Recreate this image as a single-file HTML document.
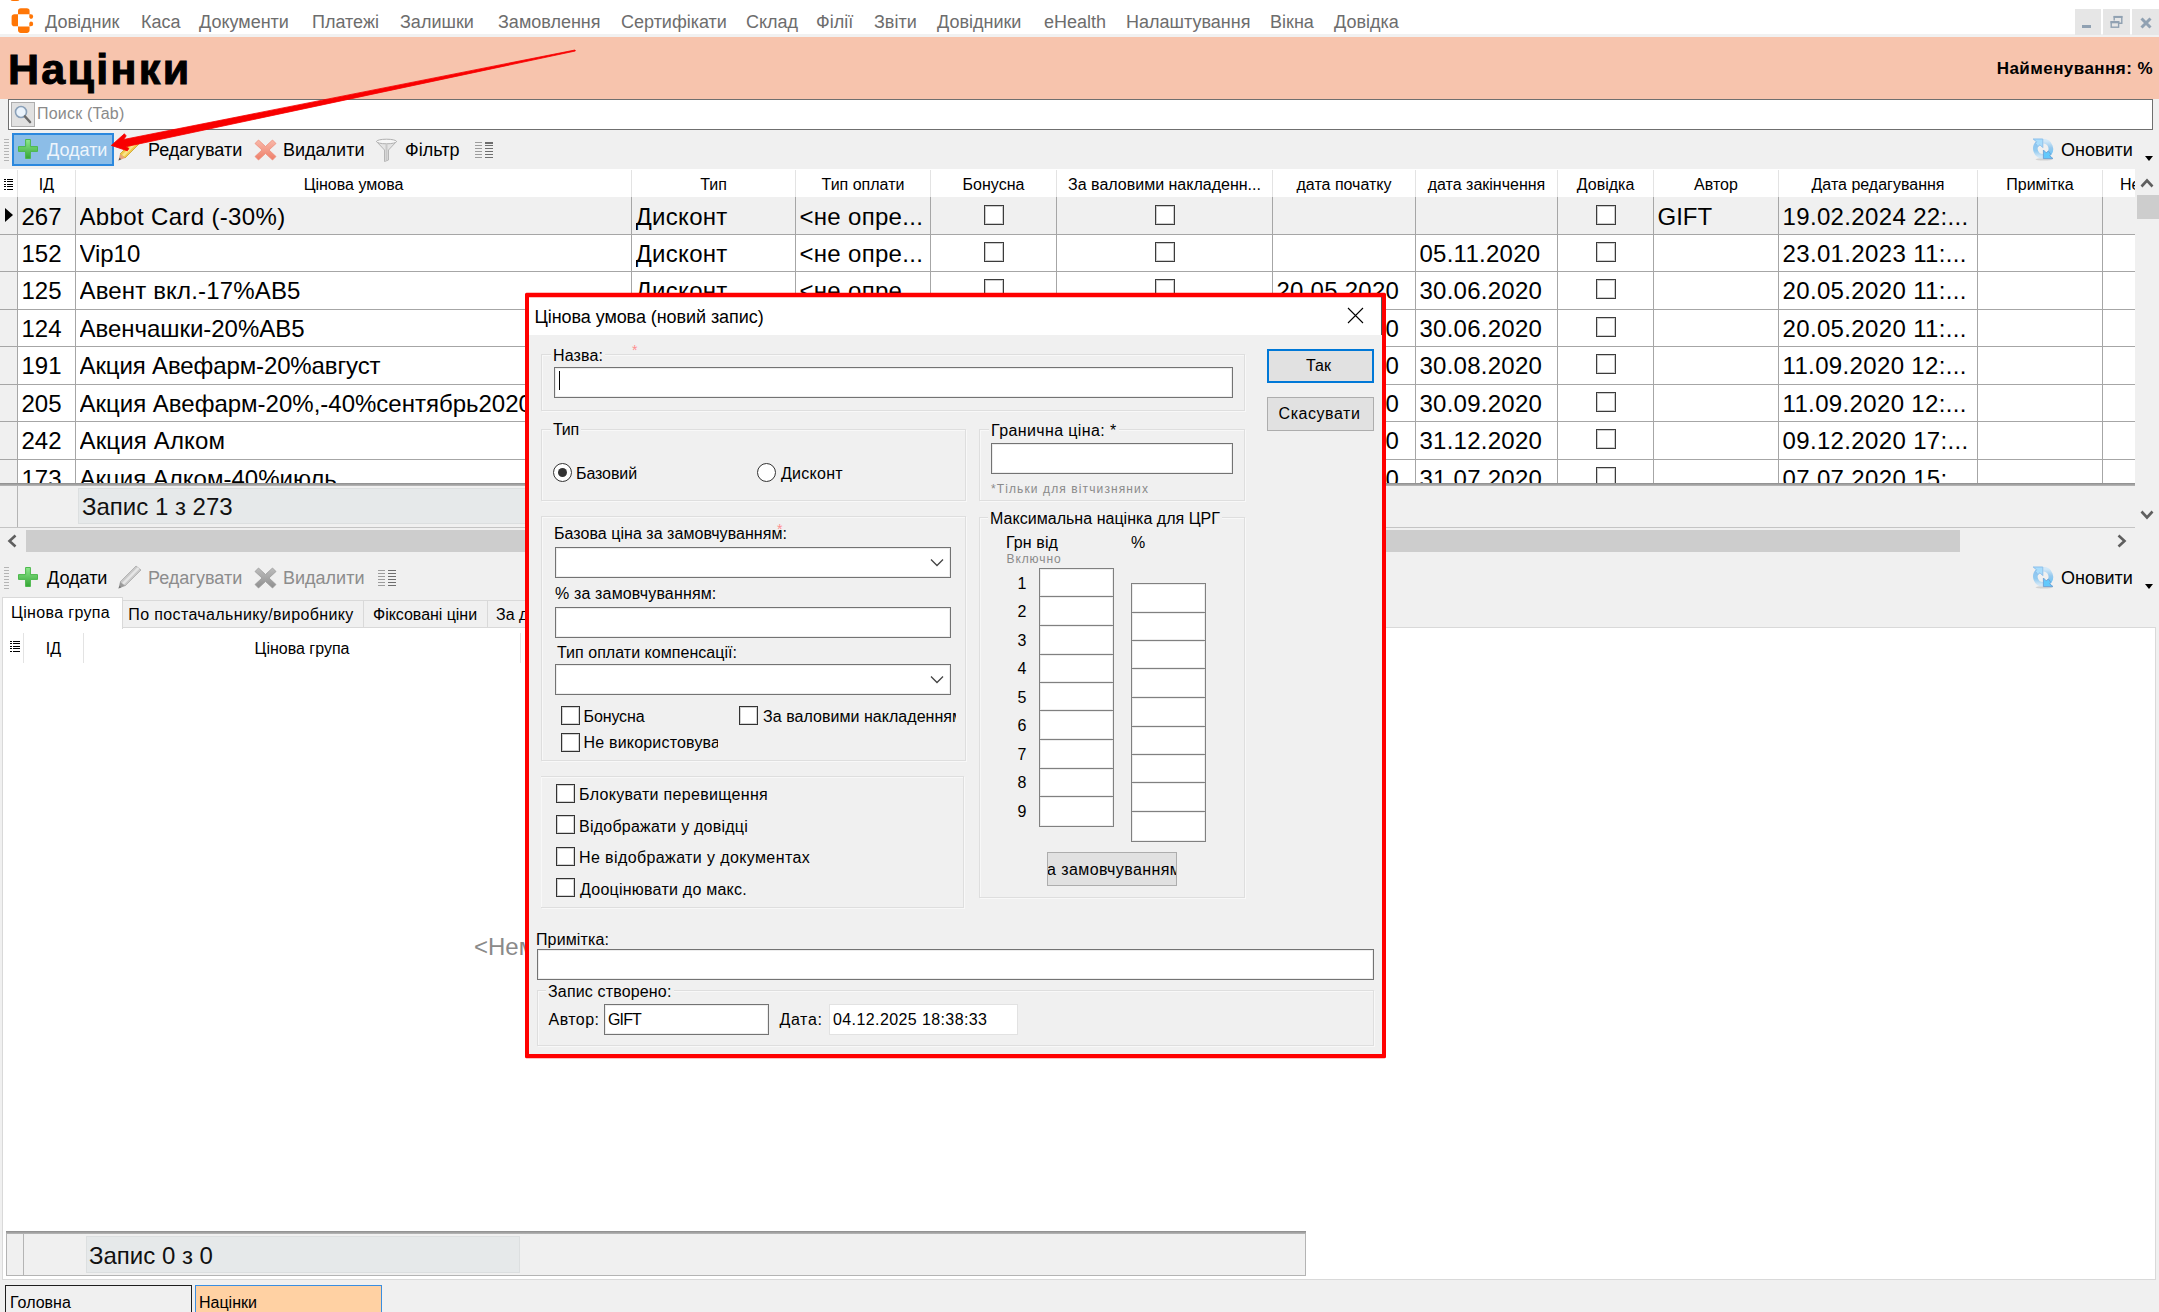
<!DOCTYPE html><html lang="uk"><head><meta charset="utf-8"><title>Націнки</title><style>
*{box-sizing:border-box}
html,body{margin:0;padding:0}
body{width:2159px;height:1312px;overflow:hidden;background:#f0f0f0;position:relative;font-family:"Liberation Sans",sans-serif;color:#000}
.a{position:absolute;white-space:nowrap}
.t16{font-size:16px;line-height:20px}
.t18{font-size:18px;line-height:22px}
.t24{font-size:24px;line-height:30px}
.menu span{position:absolute;top:11px;font-size:18px;line-height:22px;color:#6d6d6d}
.hl{position:absolute;height:1px;background:#a6a6a6}
.vl{position:absolute;width:1px;background:#a6a6a6}
.hdr{position:absolute;top:175px;font-size:16px;line-height:20px;text-align:center;white-space:nowrap;overflow:hidden}
.cell{position:absolute;font-size:24px;line-height:30px;white-space:nowrap;overflow:hidden}
.cb{position:absolute;width:17px;height:17px;border:1px solid #333;background:#fff}
.gb{position:absolute;border:1px solid #dedede;box-shadow:inset 1px 1px 0 #f8f8f8,1px 1px 0 #f8f8f8}
.gl{position:absolute;font-size:16px;line-height:18px;background:#f0f0f0;white-space:nowrap}
.inp{position:absolute;background:#fff;border:1px solid #737373;box-shadow:inset 0 0 0 1px rgba(0,0,0,.07)}
.dcb{position:absolute;width:19px;height:19px;border:1px solid #333;background:#fff;box-shadow:inset 0 0 0 1px rgba(0,0,0,.18)}
.dl{position:absolute;font-size:16px;line-height:20px;white-space:nowrap;letter-spacing:.25px}
.btn{position:absolute;background:#e1e1e1;border:1px solid #adadad;font-size:16px;text-align:center;white-space:nowrap;overflow:hidden}
</style></head><body>
<div class="a" style="left:0;top:0;width:2159px;height:37px;background:#fff"></div>
<div class="a" style="left:0;top:0;width:640px;height:2px;overflow:hidden"><div class="a" style="left:40px;top:-19.800px;font-size:18px;line-height:20px;color:#444">Довідник (Націнки) - аптечна програма, користувач: gift, підрозділ: аптека</div><div class="a" style="left:10px;top:-3px;width:10px;height:4px;background:#ff7300;border-radius:0 0 3px 3px"></div></div>
<div class="a" style="left:0;top:34px;width:2159px;height:3px;background:#f1f1f1"></div>
<svg class="a" style="left:10px;top:7px" width="26" height="28" viewBox="10 7 26 28"><g fill="#ff7606"><path d="M18 14.200V11a2.800 2.800 0 0 1 2.800-2.800h6a2.800 2.800 0 0 1 2.800 2.800v3.200z"/><path d="M18 26.400v3.700a2.800 2.800 0 0 0 2.800 2.800h6a2.800 2.800 0 0 0 2.800-2.800v-3.700z"/><path d="M18 14.300h-3.600a2.800 2.800 0 0 0-2.800 2.800v6.300a2.800 2.800 0 0 0 2.800 2.800H18z"/><path d="M29.300 14.300h1.600a2.300 2.300 0 0 1 0 4.600 2.300 2.300 0 0 1-1.600-1.300z"/><path d="M29.300 26.200h1.600a2.300 2.300 0 0 0 0-4.600 2.300 2.300 0 0 0-1.600 1.300z"/></g></svg>
<div class="menu"><span style="left:45px">Довідник</span><span style="left:141px">Каса</span><span style="left:199px">Документи</span><span style="left:312px">Платежі</span><span style="left:400px">Залишки</span><span style="left:498px">Замовлення</span><span style="left:621px">Сертифікати</span><span style="left:746px">Склад</span><span style="left:816px">Філії</span><span style="left:874px">Звіти</span><span style="left:937px">Довідники</span><span style="left:1044px">eHealth</span><span style="left:1126px">Налаштування</span><span style="left:1270px">Вікна</span><span style="left:1334px">Довідка</span></div>
<div class="a" style="left:2075px;top:9px;width:26px;height:26px;background:#e6e6e6"></div>
<div class="a" style="left:2103px;top:9px;width:27px;height:26px;background:#e6e6e6"></div>
<div class="a" style="left:2132px;top:9px;width:27px;height:26px;background:#e6e6e6"></div>
<div class="a" style="left:2082px;top:25px;width:9px;height:3px;background:#90a1b2"></div>
<svg class="a" style="left:2109px;top:15px" width="15" height="14" viewBox="0 0 15 14" fill="none" stroke="#90a1b2"><path d="M5.200 5.500V1.800h7.600v6.400h-3" stroke-width="1.400"/><path d="M4.600 1.900h8.800" stroke-width="2"/><rect x="2.200" y="6.800" width="7.400" height="5.400" stroke-width="1.400"/><path d="M1.500 7.200h8.800" stroke-width="2.200"/></svg>
<svg class="a" style="left:2139px;top:16px" width="14" height="14" viewBox="0 0 14 14" stroke="#90a1b2" stroke-width="3"><path d="M2.500 2.500l9 9M11.500 2.500l-9 9"/></svg>
<div class="a" style="left:0;top:37px;width:2159px;height:62px;background:#f7c4ad"></div>
<div class="a" style="left:8px;top:43px;font-size:43px;line-height:52px;font-weight:700;letter-spacing:2.3px;-webkit-text-stroke:1px #000">Націнки</div>
<div class="a" style="right:6px;top:59px;font-size:17px;line-height:20px;font-weight:700;letter-spacing:.45px">Найменування: %</div>
<div class="a" style="left:8px;top:99px;width:2145px;height:31px;background:#fff;border:1px solid #6f6f6f"></div>
<div class="a" style="left:11px;top:102px;width:24px;height:25px;background:#e1e1e1;border:1px solid #adadad"></div>
<svg class="a" style="left:13px;top:104px" width="20" height="21" viewBox="0 0 20 21"><circle cx="8" cy="8" r="5.500" fill="#eaf3fc" stroke="#8aa0b8" stroke-width="1.600"/><path d="M12 12.500l5 5.500" stroke="#6b6b6b" stroke-width="2.600" stroke-linecap="round"/></svg>
<div class="a" style="left:37px;top:104px;font-size:16px;line-height:20px;color:#8a8a8a;letter-spacing:.2px">Поиск (Tab)</div>
<div class="a" style="left:4px;top:137px;width:5px;height:24px;background:repeating-linear-gradient(#f0f0f0 0 2px,#b4b4b4 2px 3px)"></div>
<div class="a" style="left:12px;top:133px;width:102px;height:33px;background:#8cbde7;border:2px solid #2b88de"></div>
<svg class="a" style="left:17px;top:138px" width="22" height="22" viewBox="0 0 22 22"><defs><linearGradient id="gp17138" x1="0" y1="0" x2="0" y2="1"><stop offset="0" stop-color="#8ee88e"/><stop offset="1" stop-color="#35a535"/></linearGradient></defs><path d="M8.600 1.500h4.800v7.100h7.100v4.800h-7.100v7.100H8.600v-7.100H1.500V8.600h7.100z" fill="url(#gp17138)" stroke="#4cb84c" stroke-width="1" stroke-linejoin="round"/></svg>
<div class="a t18" style="left:47px;top:139px;color:#eef5fc">Додати</div>
<svg class="a" style="left:117px;top:137px" width="26" height="24" viewBox="0 0 26 24"><path d="M19 1l5 4L8 21l-5-4z" fill="#f2c94c" stroke="#c9a227" stroke-width=".8"/><path d="M20.500 2.200l2 1.600L7 19.500l-2-1.600z" fill="#f9e58a"/><path d="M3 17l5 4-6.500 2.500z" fill="#e9a27a"/><path d="M1.500 23.500l1-2.800 1.800 1.500z" fill="#555"/></svg>
<div class="a t18" style="left:148px;top:139px">Редагувати</div>
<svg class="a" style="left:254px;top:139px" width="23" height="22" viewBox="0 0 23 22"><defs><linearGradient id="gx254139" x1="0" y1="0" x2="0" y2="1"><stop offset="0" stop-color="#f9b9aa"/><stop offset="1" stop-color="#ee7e68"/></linearGradient></defs><path d="M4.500 1L11.500 7.500 18.500 1 22 4.500 15 11l7 6.500L18.500 21 11.500 14.500 4.500 21 1 17.500 8 11 1 4.500z" fill="url(#gx254139)" stroke="#ee8d7a" stroke-width=".8" stroke-linejoin="round"/></svg>
<div class="a t18" style="left:283px;top:139px">Видалити</div>
<svg class="a" style="left:375px;top:138px" width="23" height="24" viewBox="0 0 23 24"><path d="M1.500 3.500h20L13.500 12v10l-4 1.500V12z" fill="#e4e4e4" stroke="#b5b5b5" stroke-width="1"/><ellipse cx="11.500" cy="3.500" rx="10" ry="2.300" fill="#f6f6f6" stroke="#b0b0b0" stroke-width="1"/><path d="M11.500 6v16" stroke="#c8c8c8" stroke-width="2"/></svg>
<div class="a t18" style="left:405px;top:139px">Фільтр</div>
<div class="a" style="left:475px;top:142px;width:7px;height:17px;background:repeating-linear-gradient(#9c9c9c 0 1.400px,#f0f0f0 1.400px 2.900px)"></div><div class="a" style="left:485px;top:142px;width:8px;height:17px;background:repeating-linear-gradient(#6e6e6e 0 1.500px,#f0f0f0 1.500px 2.900px)"></div>
<svg class="a" style="left:2032px;top:138px" width="23" height="23" viewBox="0 0 23 23"><defs><linearGradient id="ra2032138" x1="0" y1="0" x2="0" y2="1"><stop offset="0" stop-color="#8ec5f0"/><stop offset=".6" stop-color="#94cbf0"/><stop offset="1" stop-color="#cfe6f6"/></linearGradient><linearGradient id="rb2032138" x1="0" y1="0" x2="0" y2="1"><stop offset="0" stop-color="#d3e8f7"/><stop offset=".5" stop-color="#96c9ee"/><stop offset="1" stop-color="#6ec4f5"/></linearGradient></defs><ellipse cx="12" cy="21.300" rx="8.500" ry="1.300" fill="#d2d2d2"/><path d="M11 18.300A7.600 7.600 0 0 1 6.200 4.800" fill="none" stroke="url(#ra2032138)" stroke-width="4.600"/><path d="M11.200 3.100A7.600 7.600 0 0 1 16 16.600" fill="none" stroke="url(#rb2032138)" stroke-width="4.600"/><path d="M1.200 1h9.600v8.600L8 6.800 5.800 8.600 3.400 5.200 4.600 3.800z" fill="#a9ddfc" stroke="#8cc0ec" stroke-width="1" stroke-linejoin="round"/><path d="M21 20.600h-9.600V12l2.800 2.800 2.200-1.800 2.400 3.400-1.200 1.400z" fill="#62c9fc" stroke="#6fa5d8" stroke-width="1" stroke-linejoin="round"/></svg>
<div class="a t18" style="left:2061px;top:139px">Оновити</div>
<div class="a" style="left:2145px;top:156px;width:0;height:0;border-left:4px solid transparent;border-right:4px solid transparent;border-top:5px solid #000"></div>
<div class="a" style="left:0;top:169px;width:2135px;height:316px;background:#fff"></div>
<div class="hdr" style="left:18px;width:57px">ІД</div>
<div class="hdr" style="left:76px;width:555px">Цінова умова</div>
<div class="hdr" style="left:632px;width:163px">Тип</div>
<div class="hdr" style="left:796px;width:134px">Тип оплати</div>
<div class="hdr" style="left:931px;width:125px">Бонусна</div>
<div class="hdr" style="left:1057px;width:215px">За валовими накладенн...</div>
<div class="hdr" style="left:1273px;width:142px">дата початку</div>
<div class="hdr" style="left:1416px;width:141px">дата закінчення</div>
<div class="hdr" style="left:1558px;width:95px">Довідка</div>
<div class="hdr" style="left:1654px;width:124px">Автор</div>
<div class="hdr" style="left:1779px;width:198px">Дата редагування</div>
<div class="hdr" style="left:1978px;width:124px">Примітка</div>
<div class="hdr" style="left:2103px;width:32px;text-align:left;padding-left:17px">Не</div>
<div class="vl" style="left:75px;top:170px;height:27px;background:#e3e3e3"></div>
<div class="vl" style="left:631px;top:170px;height:27px;background:#e3e3e3"></div>
<div class="vl" style="left:795px;top:170px;height:27px;background:#e3e3e3"></div>
<div class="vl" style="left:930px;top:170px;height:27px;background:#e3e3e3"></div>
<div class="vl" style="left:1056px;top:170px;height:27px;background:#e3e3e3"></div>
<div class="vl" style="left:1272px;top:170px;height:27px;background:#e3e3e3"></div>
<div class="vl" style="left:1415px;top:170px;height:27px;background:#e3e3e3"></div>
<div class="vl" style="left:1557px;top:170px;height:27px;background:#e3e3e3"></div>
<div class="vl" style="left:1653px;top:170px;height:27px;background:#e3e3e3"></div>
<div class="vl" style="left:1778px;top:170px;height:27px;background:#e3e3e3"></div>
<div class="vl" style="left:1977px;top:170px;height:27px;background:#e3e3e3"></div>
<div class="vl" style="left:2102px;top:170px;height:27px;background:#e3e3e3"></div>
<div class="vl" style="left:17px;top:170px;height:27px;background:#e3e3e3"></div>
<div class="a" style="left:4px;top:179px;width:9px;height:12px;background:repeating-linear-gradient(#000 0 1px,#fff 1px 2.400px)"></div><div class="a" style="left:6px;top:179px;width:1px;height:12px;background:#fff"></div>
<div class="a" style="left:0;top:169px;width:2135px;height:315px;overflow:hidden">
<div class="a" style="left:0;top:28px;width:17px;height:290px;background:#f0f0f0"></div>
<div class="a" style="left:18px;top:28px;width:2117px;height:37px;background:#f0f0f0"></div>
<div class="cell" style="left:21.5px;top:32.7px;width:53px;height:33px;letter-spacing:0.0px">267</div>
<div class="cell" style="left:79.5px;top:32.7px;width:551px;height:33px;letter-spacing:0.35px">Abbot Card (-30%)</div>
<div class="cell" style="left:635.5px;top:32.7px;width:159px;height:33px;letter-spacing:0.3px">Дисконт</div>
<div class="cell" style="left:799.5px;top:32.7px;width:130px;height:33px;letter-spacing:0.3px">&lt;не опре...</div>
<div class="cell" style="left:1657.5px;top:32.7px;width:120px;height:33px;letter-spacing:0.0px">GIFT</div>
<div class="cell" style="left:1782.5px;top:32.7px;width:194px;height:33px;letter-spacing:0.35px">19.02.2024 22:...</div>
<div class="a" style="left:983.5px;top:36.4px;width:20px;height:20px;border:1px solid #3c3c3c;background:#fff;box-shadow:inset 0 0 0 1px rgba(0,0,0,.2)"></div>
<div class="a" style="left:1154.5px;top:36.4px;width:20px;height:20px;border:1px solid #3c3c3c;background:#fff;box-shadow:inset 0 0 0 1px rgba(0,0,0,.2)"></div>
<div class="a" style="left:1595.5px;top:36.4px;width:20px;height:20px;border:1px solid #3c3c3c;background:#fff;box-shadow:inset 0 0 0 1px rgba(0,0,0,.2)"></div>
<div class="hl" style="left:0;top:65px;width:2135px"></div>
<div class="cell" style="left:21.5px;top:69.7px;width:53px;height:33px;letter-spacing:0.0px">152</div>
<div class="cell" style="left:79.5px;top:69.7px;width:551px;height:33px;letter-spacing:-0.05px">Vip10</div>
<div class="cell" style="left:635.5px;top:69.7px;width:159px;height:33px;letter-spacing:0.3px">Дисконт</div>
<div class="cell" style="left:799.5px;top:69.7px;width:130px;height:33px;letter-spacing:0.3px">&lt;не опре...</div>
<div class="cell" style="left:1419.5px;top:69.7px;width:137px;height:33px;letter-spacing:0.25px">05.11.2020</div>
<div class="cell" style="left:1782.5px;top:69.7px;width:194px;height:33px;letter-spacing:0.35px">23.01.2023 11:...</div>
<div class="a" style="left:983.5px;top:73.4px;width:20px;height:20px;border:1px solid #3c3c3c;background:#fff;box-shadow:inset 0 0 0 1px rgba(0,0,0,.2)"></div>
<div class="a" style="left:1154.5px;top:73.4px;width:20px;height:20px;border:1px solid #3c3c3c;background:#fff;box-shadow:inset 0 0 0 1px rgba(0,0,0,.2)"></div>
<div class="a" style="left:1595.5px;top:73.4px;width:20px;height:20px;border:1px solid #3c3c3c;background:#fff;box-shadow:inset 0 0 0 1px rgba(0,0,0,.2)"></div>
<div class="hl" style="left:0;top:102px;width:2135px"></div>
<div class="cell" style="left:21.5px;top:106.7px;width:53px;height:34px;letter-spacing:0.0px">125</div>
<div class="cell" style="left:79.5px;top:106.7px;width:551px;height:34px;letter-spacing:0.16px">Авент вкл.-17%АВ5</div>
<div class="cell" style="left:635.5px;top:106.7px;width:159px;height:34px;letter-spacing:0.3px">Дисконт</div>
<div class="cell" style="left:799.5px;top:106.7px;width:130px;height:34px;letter-spacing:0.3px">&lt;не опре...</div>
<div class="cell" style="left:1276.5px;top:106.7px;width:138px;height:34px;letter-spacing:0.25px">20.05.2020</div>
<div class="cell" style="left:1419.5px;top:106.7px;width:137px;height:34px;letter-spacing:0.25px">30.06.2020</div>
<div class="cell" style="left:1782.5px;top:106.7px;width:194px;height:34px;letter-spacing:0.35px">20.05.2020 11:...</div>
<div class="a" style="left:983.5px;top:110.4px;width:20px;height:20px;border:1px solid #3c3c3c;background:#fff;box-shadow:inset 0 0 0 1px rgba(0,0,0,.2)"></div>
<div class="a" style="left:1154.5px;top:110.4px;width:20px;height:20px;border:1px solid #3c3c3c;background:#fff;box-shadow:inset 0 0 0 1px rgba(0,0,0,.2)"></div>
<div class="a" style="left:1595.5px;top:110.4px;width:20px;height:20px;border:1px solid #3c3c3c;background:#fff;box-shadow:inset 0 0 0 1px rgba(0,0,0,.2)"></div>
<div class="hl" style="left:0;top:140px;width:2135px"></div>
<div class="cell" style="left:21.5px;top:144.7px;width:53px;height:33px;letter-spacing:0.0px">124</div>
<div class="cell" style="left:79.5px;top:144.7px;width:551px;height:33px;letter-spacing:-0.03px">Авенчашки-20%АВ5</div>
<div class="cell" style="left:635.5px;top:144.7px;width:159px;height:33px;letter-spacing:0.3px">Дисконт</div>
<div class="cell" style="left:799.5px;top:144.7px;width:130px;height:33px;letter-spacing:0.3px">&lt;не опре...</div>
<div class="cell" style="left:1276.5px;top:144.7px;width:138px;height:33px;letter-spacing:0.25px">20.05.2020</div>
<div class="cell" style="left:1419.5px;top:144.7px;width:137px;height:33px;letter-spacing:0.25px">30.06.2020</div>
<div class="cell" style="left:1782.5px;top:144.7px;width:194px;height:33px;letter-spacing:0.35px">20.05.2020 11:...</div>
<div class="a" style="left:983.5px;top:148.4px;width:20px;height:20px;border:1px solid #3c3c3c;background:#fff;box-shadow:inset 0 0 0 1px rgba(0,0,0,.2)"></div>
<div class="a" style="left:1154.5px;top:148.4px;width:20px;height:20px;border:1px solid #3c3c3c;background:#fff;box-shadow:inset 0 0 0 1px rgba(0,0,0,.2)"></div>
<div class="a" style="left:1595.5px;top:148.4px;width:20px;height:20px;border:1px solid #3c3c3c;background:#fff;box-shadow:inset 0 0 0 1px rgba(0,0,0,.2)"></div>
<div class="hl" style="left:0;top:177px;width:2135px"></div>
<div class="cell" style="left:21.5px;top:181.7px;width:53px;height:34px;letter-spacing:0.0px">191</div>
<div class="cell" style="left:79.5px;top:181.7px;width:551px;height:34px;letter-spacing:-0.12px">Акция Авефарм-20%август</div>
<div class="cell" style="left:635.5px;top:181.7px;width:159px;height:34px;letter-spacing:0.3px">Дисконт</div>
<div class="cell" style="left:799.5px;top:181.7px;width:130px;height:34px;letter-spacing:0.3px">&lt;не опре...</div>
<div class="cell" style="left:1276.5px;top:181.7px;width:138px;height:34px;letter-spacing:0.25px">01.08.2020</div>
<div class="cell" style="left:1419.5px;top:181.7px;width:137px;height:34px;letter-spacing:0.25px">30.08.2020</div>
<div class="cell" style="left:1782.5px;top:181.7px;width:194px;height:34px;letter-spacing:0.35px">11.09.2020 12:...</div>
<div class="a" style="left:983.5px;top:185.4px;width:20px;height:20px;border:1px solid #3c3c3c;background:#fff;box-shadow:inset 0 0 0 1px rgba(0,0,0,.2)"></div>
<div class="a" style="left:1154.5px;top:185.4px;width:20px;height:20px;border:1px solid #3c3c3c;background:#fff;box-shadow:inset 0 0 0 1px rgba(0,0,0,.2)"></div>
<div class="a" style="left:1595.5px;top:185.4px;width:20px;height:20px;border:1px solid #3c3c3c;background:#fff;box-shadow:inset 0 0 0 1px rgba(0,0,0,.2)"></div>
<div class="hl" style="left:0;top:215px;width:2135px"></div>
<div class="cell" style="left:21.5px;top:219.7px;width:53px;height:33px;letter-spacing:0.0px">205</div>
<div class="cell" style="left:79.5px;top:219.7px;width:551px;height:33px;letter-spacing:0.0px">Акция Авефарм-20%,-40%сентябрь2020</div>
<div class="cell" style="left:635.5px;top:219.7px;width:159px;height:33px;letter-spacing:0.3px">Дисконт</div>
<div class="cell" style="left:799.5px;top:219.7px;width:130px;height:33px;letter-spacing:0.3px">&lt;не опре...</div>
<div class="cell" style="left:1276.5px;top:219.7px;width:138px;height:33px;letter-spacing:0.25px">01.09.2020</div>
<div class="cell" style="left:1419.5px;top:219.7px;width:137px;height:33px;letter-spacing:0.25px">30.09.2020</div>
<div class="cell" style="left:1782.5px;top:219.7px;width:194px;height:33px;letter-spacing:0.35px">11.09.2020 12:...</div>
<div class="a" style="left:983.5px;top:223.4px;width:20px;height:20px;border:1px solid #3c3c3c;background:#fff;box-shadow:inset 0 0 0 1px rgba(0,0,0,.2)"></div>
<div class="a" style="left:1154.5px;top:223.4px;width:20px;height:20px;border:1px solid #3c3c3c;background:#fff;box-shadow:inset 0 0 0 1px rgba(0,0,0,.2)"></div>
<div class="a" style="left:1595.5px;top:223.4px;width:20px;height:20px;border:1px solid #3c3c3c;background:#fff;box-shadow:inset 0 0 0 1px rgba(0,0,0,.2)"></div>
<div class="hl" style="left:0;top:252px;width:2135px"></div>
<div class="cell" style="left:21.5px;top:256.7px;width:53px;height:34px;letter-spacing:0.0px">242</div>
<div class="cell" style="left:79.5px;top:256.7px;width:551px;height:34px;letter-spacing:0.16px">Акция Алком</div>
<div class="cell" style="left:635.5px;top:256.7px;width:159px;height:34px;letter-spacing:0.3px">Дисконт</div>
<div class="cell" style="left:799.5px;top:256.7px;width:130px;height:34px;letter-spacing:0.3px">&lt;не опре...</div>
<div class="cell" style="left:1276.5px;top:256.7px;width:138px;height:34px;letter-spacing:0.25px">01.12.2020</div>
<div class="cell" style="left:1419.5px;top:256.7px;width:137px;height:34px;letter-spacing:0.25px">31.12.2020</div>
<div class="cell" style="left:1782.5px;top:256.7px;width:194px;height:34px;letter-spacing:0.35px">09.12.2020 17:...</div>
<div class="a" style="left:983.5px;top:260.4px;width:20px;height:20px;border:1px solid #3c3c3c;background:#fff;box-shadow:inset 0 0 0 1px rgba(0,0,0,.2)"></div>
<div class="a" style="left:1154.5px;top:260.4px;width:20px;height:20px;border:1px solid #3c3c3c;background:#fff;box-shadow:inset 0 0 0 1px rgba(0,0,0,.2)"></div>
<div class="a" style="left:1595.5px;top:260.4px;width:20px;height:20px;border:1px solid #3c3c3c;background:#fff;box-shadow:inset 0 0 0 1px rgba(0,0,0,.2)"></div>
<div class="hl" style="left:0;top:290px;width:2135px"></div>
<div class="cell" style="left:21.5px;top:294.7px;width:53px;height:34px;letter-spacing:0.0px">173</div>
<div class="cell" style="left:79.5px;top:294.7px;width:551px;height:34px;letter-spacing:0.0px">Акция Алком-40%июль</div>
<div class="cell" style="left:635.5px;top:294.7px;width:159px;height:34px;letter-spacing:0.3px">Дисконт</div>
<div class="cell" style="left:799.5px;top:294.7px;width:130px;height:34px;letter-spacing:0.3px">&lt;не опре...</div>
<div class="cell" style="left:1276.5px;top:294.7px;width:138px;height:34px;letter-spacing:0.25px">01.07.2020</div>
<div class="cell" style="left:1419.5px;top:294.7px;width:137px;height:34px;letter-spacing:0.25px">31.07.2020</div>
<div class="cell" style="left:1782.5px;top:294.7px;width:194px;height:34px;letter-spacing:0.35px">07.07.2020 15:...</div>
<div class="a" style="left:983.5px;top:298.4px;width:20px;height:20px;border:1px solid #3c3c3c;background:#fff;box-shadow:inset 0 0 0 1px rgba(0,0,0,.2)"></div>
<div class="a" style="left:1154.5px;top:298.4px;width:20px;height:20px;border:1px solid #3c3c3c;background:#fff;box-shadow:inset 0 0 0 1px rgba(0,0,0,.2)"></div>
<div class="a" style="left:1595.5px;top:298.4px;width:20px;height:20px;border:1px solid #3c3c3c;background:#fff;box-shadow:inset 0 0 0 1px rgba(0,0,0,.2)"></div>
<div class="hl" style="left:0;top:328px;width:2135px"></div>
<div class="vl" style="left:17px;top:28px;height:290px"></div>
<div class="vl" style="left:75px;top:28px;height:290px"></div>
<div class="vl" style="left:631px;top:28px;height:290px"></div>
<div class="vl" style="left:795px;top:28px;height:290px"></div>
<div class="vl" style="left:930px;top:28px;height:290px"></div>
<div class="vl" style="left:1056px;top:28px;height:290px"></div>
<div class="vl" style="left:1272px;top:28px;height:290px"></div>
<div class="vl" style="left:1415px;top:28px;height:290px"></div>
<div class="vl" style="left:1557px;top:28px;height:290px"></div>
<div class="vl" style="left:1653px;top:28px;height:290px"></div>
<div class="vl" style="left:1778px;top:28px;height:290px"></div>
<div class="vl" style="left:1977px;top:28px;height:290px"></div>
<div class="vl" style="left:2102px;top:28px;height:290px"></div>
<div class="a" style="left:5px;top:39px;width:0;height:0;border-top:7px solid transparent;border-bottom:7px solid transparent;border-left:8px solid #000"></div>
</div>
<div class="a" style="left:0;top:483px;width:2135px;height:3px;background:linear-gradient(#8c8c8c,#b8b8b8)"></div>
<div class="a" style="left:0;top:486px;width:2135px;height:41px;background:#f0f0f0"></div>
<div class="vl" style="left:17px;top:486px;height:41px;background:#b4b4b4"></div>
<div class="a" style="left:78px;top:488px;width:554px;height:36px;background:#e6e9ea;border:1px solid #dcdfe0"></div>
<div class="a t24" style="left:82px;top:491.500px;letter-spacing:0;color:#111">Запис 1 з 273</div>
<div class="hl" style="left:0;top:527px;width:2135px;background:#c4c4c4"></div>
<div class="a" style="left:2135px;top:169px;width:24px;height:359px;background:#f0f0f0"></div>
<svg class="a" style="left:2140px;top:178px" width="14" height="10" viewBox="0 0 14 10" fill="none" stroke="#5f5f5f" stroke-width="2.600"><path d="M1.500 8.500l5.500-6 5.500 6"/></svg>
<div class="a" style="left:2137px;top:195px;width:22px;height:24px;background:#cdcdcd"></div>
<svg class="a" style="left:2140px;top:510px" width="14" height="10" viewBox="0 0 14 10" fill="none" stroke="#5f5f5f" stroke-width="2.600"><path d="M1.500 1.500l5.500 6 5.500-6"/></svg>
<div class="a" style="left:0;top:528px;width:2159px;height:25px;background:#f0f0f0"></div>
<svg class="a" style="left:7px;top:534px" width="10" height="14" viewBox="0 0 10 14" fill="none" stroke="#5f5f5f" stroke-width="2.600"><path d="M8.500 1.500l-6 5.500 6 5.500"/></svg>
<div class="a" style="left:26px;top:530px;width:1934px;height:22px;background:#cdcdcd"></div>
<svg class="a" style="left:2117px;top:534px" width="10" height="14" viewBox="0 0 10 14" fill="none" stroke="#5f5f5f" stroke-width="2.600"><path d="M1.500 1.500l6 5.500-6 5.500"/></svg>
<div class="a" style="left:4px;top:565px;width:5px;height:24px;background:repeating-linear-gradient(#f0f0f0 0 2px,#b4b4b4 2px 3px)"></div>
<svg class="a" style="left:17px;top:566px" width="22" height="22" viewBox="0 0 22 22"><defs><linearGradient id="gp17566" x1="0" y1="0" x2="0" y2="1"><stop offset="0" stop-color="#8ee88e"/><stop offset="1" stop-color="#35a535"/></linearGradient></defs><path d="M8.600 1.500h4.800v7.100h7.100v4.800h-7.100v7.100H8.600v-7.100H1.500V8.600h7.100z" fill="url(#gp17566)" stroke="#4cb84c" stroke-width="1" stroke-linejoin="round"/></svg>
<div class="a t18" style="left:47px;top:567px">Додати</div>
<svg class="a" style="left:117px;top:565px" width="26" height="24" viewBox="0 0 26 24"><path d="M19 1l5 4L8 21l-5-4z" fill="#c9c9c9" stroke="#aaa" stroke-width=".8"/><path d="M20.500 2.200l2 1.600L7 19.500l-2-1.600z" fill="#e6e6e6"/><path d="M3 17l5 4-6.500 2.500z" fill="#9a9a9a"/><path d="M1.500 23.500l1-2.800 1.800 1.500z" fill="#777"/></svg>
<div class="a t18" style="left:148px;top:567px;color:#8c8c8c">Редагувати</div>
<svg class="a" style="left:254px;top:567px" width="23" height="22" viewBox="0 0 23 22"><defs><linearGradient id="gx254567" x1="0" y1="0" x2="0" y2="1"><stop offset="0" stop-color="#bdbdbd"/><stop offset="1" stop-color="#8f8f8f"/></linearGradient></defs><path d="M4.500 1L11.500 7.500 18.500 1 22 4.500 15 11l7 6.500L18.500 21 11.500 14.500 4.500 21 1 17.500 8 11 1 4.500z" fill="url(#gx254567)" stroke="#9a9a9a" stroke-width=".8" stroke-linejoin="round"/></svg>
<div class="a t18" style="left:283px;top:567px;color:#8c8c8c">Видалити</div>
<div class="a" style="left:378px;top:570px;width:7px;height:17px;background:repeating-linear-gradient(#9c9c9c 0 1.400px,#f0f0f0 1.400px 2.900px)"></div><div class="a" style="left:388px;top:570px;width:8px;height:17px;background:repeating-linear-gradient(#6e6e6e 0 1.500px,#f0f0f0 1.500px 2.900px)"></div>
<svg class="a" style="left:2032px;top:566px" width="23" height="23" viewBox="0 0 23 23"><defs><linearGradient id="ra2032566" x1="0" y1="0" x2="0" y2="1"><stop offset="0" stop-color="#8ec5f0"/><stop offset=".6" stop-color="#94cbf0"/><stop offset="1" stop-color="#cfe6f6"/></linearGradient><linearGradient id="rb2032566" x1="0" y1="0" x2="0" y2="1"><stop offset="0" stop-color="#d3e8f7"/><stop offset=".5" stop-color="#96c9ee"/><stop offset="1" stop-color="#6ec4f5"/></linearGradient></defs><ellipse cx="12" cy="21.300" rx="8.500" ry="1.300" fill="#d2d2d2"/><path d="M11 18.300A7.600 7.600 0 0 1 6.200 4.800" fill="none" stroke="url(#ra2032566)" stroke-width="4.600"/><path d="M11.200 3.100A7.600 7.600 0 0 1 16 16.600" fill="none" stroke="url(#rb2032566)" stroke-width="4.600"/><path d="M1.200 1h9.600v8.600L8 6.800 5.800 8.600 3.400 5.200 4.600 3.800z" fill="#a9ddfc" stroke="#8cc0ec" stroke-width="1" stroke-linejoin="round"/><path d="M21 20.600h-9.600V12l2.800 2.800 2.200-1.800 2.400 3.400-1.200 1.400z" fill="#62c9fc" stroke="#6fa5d8" stroke-width="1" stroke-linejoin="round"/></svg>
<div class="a t18" style="left:2061px;top:567px">Оновити</div>
<div class="a" style="left:2145px;top:584px;width:0;height:0;border-left:4px solid transparent;border-right:4px solid transparent;border-top:5px solid #000"></div>
<div class="a" style="left:2px;top:627px;width:2154px;height:653px;background:#fff;border:1px solid #d9d9d9"></div>
<div class="a" style="left:122px;top:600px;width:242px;height:28px;background:#f0f0f0;border:1px solid #d9d9d9"></div>
<div class="a" style="left:128.3px;top:605.7px;font-size:16px;line-height:18px;letter-spacing:0.37px;color:#000;">По постачальнику/виробнику</div>
<div class="a" style="left:363px;top:600px;width:125px;height:28px;background:#f0f0f0;border:1px solid #d9d9d9"></div>
<div class="a" style="left:373.1px;top:605.7px;font-size:16px;line-height:18px;letter-spacing:-0.04px;color:#000;">Фіксовані ціни</div>
<div class="a" style="left:487px;top:600px;width:84px;height:28px;background:#f0f0f0;border:1px solid #d9d9d9"></div>
<div class="a" style="left:496px;top:605.7px;font-size:16px;line-height:18px;letter-spacing:0.00px;color:#000;">За датою</div>
<div class="a t16" style="left:2px;top:597px;width:121px;height:32px;background:#fff;border:1px solid #d9d9d9;border-bottom:none;padding:5px 0 0 8px;letter-spacing:.35px">Цінова група</div>
<div class="a" style="left:10px;top:641px;width:10px;height:12px;background:repeating-linear-gradient(#000 0 1px,#fff 1px 2.400px)"></div><div class="a" style="left:12px;top:641px;width:1px;height:12px;background:#fff"></div>
<div class="vl" style="left:23px;top:633px;height:30px;background:#e3e3e3"></div><div class="vl" style="left:83px;top:633px;height:30px;background:#e3e3e3"></div><div class="vl" style="left:520px;top:633px;height:30px;background:#e3e3e3"></div>
<div class="a t16" style="left:24px;top:639px;width:59px;text-align:center">ІД</div>
<div class="a t16" style="left:84px;top:639px;width:436px;text-align:center">Цінова група</div>
<div class="a t24" style="left:474px;top:932px;color:#8a8a8a">&lt;Немає даних для відображення&gt;</div>
<div class="a" style="left:6px;top:1231px;width:1300px;height:3px;background:linear-gradient(#8c8c8c,#b8b8b8)"></div>
<div class="a" style="left:6px;top:1234px;width:1300px;height:42px;background:#f0f0f0;border:1px solid #b4b4b4;border-top:none"></div>
<div class="vl" style="left:23px;top:1234px;height:41px;background:#b4b4b4"></div>
<div class="a" style="left:86px;top:1236px;width:434px;height:37px;background:#e6e9ea;border:1px solid #dcdfe0"></div>
<div class="a t24" style="left:89px;top:1241px;letter-spacing:0;color:#111">Запис 0 з 0</div>
<div class="a t16" style="left:5px;top:1285px;width:187px;height:30px;border:1px solid #1e1e1e;background:#f0f0f0;padding:7px 0 0 4px">Головна</div>
<div class="a t16" style="left:195px;top:1285px;width:187px;height:30px;border:1px solid #3a8ee0;background:#ffd1a3;padding:7px 0 0 3px">Націнки</div>
<div class="a" style="left:528px;top:296px;width:855px;height:759px;background:#f0f0f0"></div>
<div class="a" style="left:528px;top:296px;width:853px;height:39px;background:#fff"></div>
<div class="a" style="left:1381px;top:297px;width:1px;height:38px;background:#555"></div>
<svg class="a" style="left:520px;top:288px" width="872" height="776" viewBox="520 288 872 776"><path fill="#ff0000" fill-rule="evenodd" d="M526.500 292.800h858a1.500 1.500 0 0 1 1.500 1.500v762.500a1.500 1.500 0 0 1-1.500 1.500h-858a1.500 1.500 0 0 1-1.500-1.500V294.300a1.500 1.500 0 0 1 1.500-1.500zM529 297.300V1054h853V297.300z"/></svg>
<div class="a" style="left:534.5px;top:307.0px;font-size:18px;line-height:20px;letter-spacing:-0.07px;color:#000;">Цінова умова (новий запис)</div>
<svg class="a" style="left:1347px;top:307px" width="17" height="17" viewBox="0 0 17 17" stroke="#000" stroke-width="1.100"><path d="M1 1l15 15M16 1L1 16"/></svg>
<div class="gb" style="left:541px;top:354px;width:704px;height:57px;"></div>
<div class="a" style="left:551px;top:346.9px;font-size:16px;line-height:18px;letter-spacing:0.12px;color:#000;background:#f0f0f0;padding:0 2px;">Назва:</div>
<div class="a" style="left:632px;top:343px;font-size:14px;line-height:14px;color:#ff8f8f">*</div>
<div class="inp" style="left:554px;top:367px;width:679px;height:31px"></div>
<div class="a" style="left:559px;top:371px;width:1px;height:19px;background:#000"></div>
<div class="btn" style="left:1267px;top:349px;width:107px;height:34px;border:2px solid #0078d7;line-height:30px;padding-right:4px">Так</div>
<div class="btn" style="left:1267px;top:397px;width:107px;height:34px;line-height:32px;letter-spacing:.55px;padding-right:2px">Скасувати</div>
<div class="gb" style="left:541px;top:429px;width:425px;height:72px;"></div>
<div class="a" style="left:551px;top:421.4px;font-size:16px;line-height:18px;letter-spacing:-0.22px;color:#000;background:#f0f0f0;padding:0 2px;">Тип</div>
<div class="a" style="left:553.0px;top:463.0px;width:19px;height:19px;border-radius:50%;border:1px solid #333;background:#fff"><div class="a" style="left:4px;top:4px;width:9px;height:9px;border-radius:50%;background:#333"></div></div>
<div class="a" style="left:576px;top:465.1px;font-size:16px;line-height:18px;letter-spacing:-0.09px;color:#000;">Базовий</div>
<div class="a" style="left:757.0px;top:463.0px;width:19px;height:19px;border-radius:50%;border:1px solid #333;background:#fff"></div>
<div class="a" style="left:781px;top:465.1px;font-size:16px;line-height:18px;letter-spacing:0.28px;color:#000;">Дисконт</div>
<div class="gb" style="left:979px;top:429px;width:266px;height:72px;"></div>
<div class="a" style="left:989px;top:421.6px;font-size:16px;line-height:18px;letter-spacing:0.38px;color:#000;background:#f0f0f0;padding:0 2px;">Гранична ціна: *</div>
<div class="inp" style="left:991px;top:443px;width:242px;height:31px"></div>
<div class="a" style="left:991px;top:482.0px;font-size:12px;line-height:14px;letter-spacing:1.11px;color:#8a8a8a;">*Тільки для вітчизняних</div>
<div class="gb" style="left:541px;top:516px;width:425px;height:245px;"></div>
<div class="a" style="left:554px;top:525.3px;font-size:16px;line-height:18px;letter-spacing:0.04px;color:#000;">Базова ціна за замовчуванням:</div>
<div class="a" style="left:777px;top:522px;font-size:14px;line-height:14px;color:#ff8f8f">*</div>
<div class="inp" style="left:555px;top:547px;width:396px;height:31px"></div><svg class="a" style="left:930px;top:558px" width="14" height="9" viewBox="0 0 14 9" fill="none" stroke="#444" stroke-width="1.300"><path d="M1 1.500l6 6 6-6"/></svg>
<div class="a" style="left:555px;top:585.3px;font-size:16px;line-height:18px;letter-spacing:0.15px;color:#000;">% за замовчуванням:</div>
<div class="inp" style="left:555px;top:607px;width:396px;height:31px"></div>
<div class="a" style="left:557px;top:643.8px;font-size:16px;line-height:18px;letter-spacing:0.03px;color:#000;">Тип оплати компенсації:</div>
<div class="inp" style="left:555px;top:664px;width:396px;height:31px"></div><svg class="a" style="left:930px;top:675px" width="14" height="9" viewBox="0 0 14 9" fill="none" stroke="#444" stroke-width="1.300"><path d="M1 1.500l6 6 6-6"/></svg>
<div class="dcb" style="left:561px;top:706px"></div>
<div class="a" style="left:583.5px;top:707.6px;font-size:16px;line-height:18px;letter-spacing:-0.11px;color:#000;">Бонусна</div>
<div class="dcb" style="left:739px;top:706px"></div>
<div class="a" style="left:0;top:0;width:956px;height:760px;overflow:hidden"><div class="a" style="left:763px;top:707.6px;font-size:16px;line-height:18px;letter-spacing:0.04px;color:#000;">За валовими накладенням</div></div>
<div class="dcb" style="left:561px;top:733px"></div>
<div class="a" style="left:0;top:0;width:718px;height:760px;overflow:hidden"><div class="a" style="left:583.5px;top:734.2px;font-size:16px;line-height:18px;letter-spacing:0.19px;color:#000;">Не використовувати</div></div>
<div class="gb" style="left:541px;top:776px;width:423px;height:132px;border-left:none;"></div>
<div class="dcb" style="left:556px;top:784px"></div>
<div class="a" style="left:579px;top:786.0px;font-size:16px;line-height:18px;letter-spacing:0.31px;color:#000;">Блокувати перевищення</div>
<div class="dcb" style="left:556px;top:815px"></div>
<div class="a" style="left:579px;top:817.6px;font-size:16px;line-height:18px;letter-spacing:0.23px;color:#000;">Відображати у довідці</div>
<div class="dcb" style="left:556px;top:847px"></div>
<div class="a" style="left:579px;top:849.1px;font-size:16px;line-height:18px;letter-spacing:0.39px;color:#000;">Не відображати у документах</div>
<div class="dcb" style="left:556px;top:878px"></div>
<div class="a" style="left:580px;top:880.9px;font-size:16px;line-height:18px;letter-spacing:0.24px;color:#000;">Дооцінювати до макс.</div>
<div class="gb" style="left:979px;top:517px;width:266px;height:381px;"></div>
<div class="a" style="left:988px;top:509.7px;font-size:16px;line-height:18px;letter-spacing:0.03px;color:#000;background:#f0f0f0;padding:0 2px;">Максимальна націнка для ЦРГ</div>
<div class="a" style="left:1006px;top:534.2px;font-size:16px;line-height:18px;letter-spacing:0.09px;color:#000;">Грн від</div>
<div class="a" style="left:1131px;top:534.2px;font-size:16px;line-height:18px;letter-spacing:1.27px;color:#000;">%</div>
<div class="a" style="left:1006.5px;top:552.4px;font-size:12px;line-height:14px;letter-spacing:0.90px;color:#8a8a8a;">Включно</div>
<div class="inp" style="left:1039px;top:568px;width:75px;height:29px;border-color:#808080"></div>
<div class="inp" style="left:1131px;top:583px;width:75px;height:30px;border-color:#808080"></div>
<div class="a" style="left:1017.5px;top:574.9px;font-size:16px;line-height:18px;letter-spacing:0.00px;color:#000;">1</div>
<div class="inp" style="left:1039px;top:596px;width:75px;height:30px;border-color:#808080"></div>
<div class="inp" style="left:1131px;top:612px;width:75px;height:29px;border-color:#808080"></div>
<div class="a" style="left:1017.5px;top:603.4px;font-size:16px;line-height:18px;letter-spacing:0.00px;color:#000;">2</div>
<div class="inp" style="left:1039px;top:625px;width:75px;height:30px;border-color:#808080"></div>
<div class="inp" style="left:1131px;top:640px;width:75px;height:29px;border-color:#808080"></div>
<div class="a" style="left:1017.5px;top:631.9px;font-size:16px;line-height:18px;letter-spacing:0.00px;color:#000;">3</div>
<div class="inp" style="left:1039px;top:654px;width:75px;height:29px;border-color:#808080"></div>
<div class="inp" style="left:1131px;top:668px;width:75px;height:30px;border-color:#808080"></div>
<div class="a" style="left:1017.5px;top:660.4px;font-size:16px;line-height:18px;letter-spacing:0.00px;color:#000;">4</div>
<div class="inp" style="left:1039px;top:682px;width:75px;height:29px;border-color:#808080"></div>
<div class="inp" style="left:1131px;top:697px;width:75px;height:30px;border-color:#808080"></div>
<div class="a" style="left:1017.5px;top:688.9px;font-size:16px;line-height:18px;letter-spacing:0.00px;color:#000;">5</div>
<div class="inp" style="left:1039px;top:710px;width:75px;height:30px;border-color:#808080"></div>
<div class="inp" style="left:1131px;top:726px;width:75px;height:29px;border-color:#808080"></div>
<div class="a" style="left:1017.5px;top:717.4px;font-size:16px;line-height:18px;letter-spacing:0.00px;color:#000;">6</div>
<div class="inp" style="left:1039px;top:739px;width:75px;height:30px;border-color:#808080"></div>
<div class="inp" style="left:1131px;top:754px;width:75px;height:29px;border-color:#808080"></div>
<div class="a" style="left:1017.5px;top:745.9px;font-size:16px;line-height:18px;letter-spacing:0.00px;color:#000;">7</div>
<div class="inp" style="left:1039px;top:768px;width:75px;height:29px;border-color:#808080"></div>
<div class="inp" style="left:1131px;top:782px;width:75px;height:30px;border-color:#808080"></div>
<div class="a" style="left:1017.5px;top:774.4px;font-size:16px;line-height:18px;letter-spacing:0.00px;color:#000;">8</div>
<div class="inp" style="left:1039px;top:796px;width:75px;height:31px;border-color:#808080"></div>
<div class="inp" style="left:1131px;top:811px;width:75px;height:31px;border-color:#808080"></div>
<div class="a" style="left:1017.5px;top:802.9px;font-size:16px;line-height:18px;letter-spacing:0.00px;color:#000;">9</div>
<div class="btn" style="left:1047px;top:852px;width:130px;height:34px;line-height:33px"><span style="margin-left:-11px;letter-spacing:.4px">За замовчуванням</span></div>
<div class="a" style="left:536px;top:931.4px;font-size:16px;line-height:18px;letter-spacing:0.12px;color:#000;">Примітка:</div>
<div class="inp" style="left:537px;top:949px;width:837px;height:31px"></div>
<div class="gb" style="left:537px;top:990px;width:837px;height:56px;"></div>
<div class="a" style="left:546px;top:982.7px;font-size:16px;line-height:18px;letter-spacing:0.16px;color:#000;background:#f0f0f0;padding:0 2px;">Запис створено:</div>
<div class="a" style="left:548.5px;top:1010.7px;font-size:16px;line-height:18px;letter-spacing:0.46px;color:#000;">Автор:</div>
<div class="inp" style="left:604px;top:1004px;width:165px;height:31px"></div>
<div class="a" style="left:608px;top:1010.7px;font-size:16px;line-height:18px;letter-spacing:-0.86px;color:#000;">GIFT</div>
<div class="a" style="left:779.5px;top:1010.7px;font-size:16px;line-height:18px;letter-spacing:0.62px;color:#000;">Дата:</div>
<div class="inp" style="left:829px;top:1004px;width:189px;height:31px;border-color:#e2e2e2;box-shadow:none"></div>
<div class="a" style="left:833px;top:1010.7px;font-size:16px;line-height:18px;letter-spacing:0.40px;color:#000;">04.12.2025 18:38:33</div>
<svg class="a" style="left:0;top:0" width="700" height="200" viewBox="0 0 700 200"><path d="M575 50L123.600 139.500 126.200 135.900 124.400 133.800 111.300 145.400 127.300 150.800 128.900 148.600 125.800 146.700 575.300 51z" fill="#f80000" stroke="#f80000" stroke-width=".8" stroke-linejoin="round"/></svg>
</body></html>
